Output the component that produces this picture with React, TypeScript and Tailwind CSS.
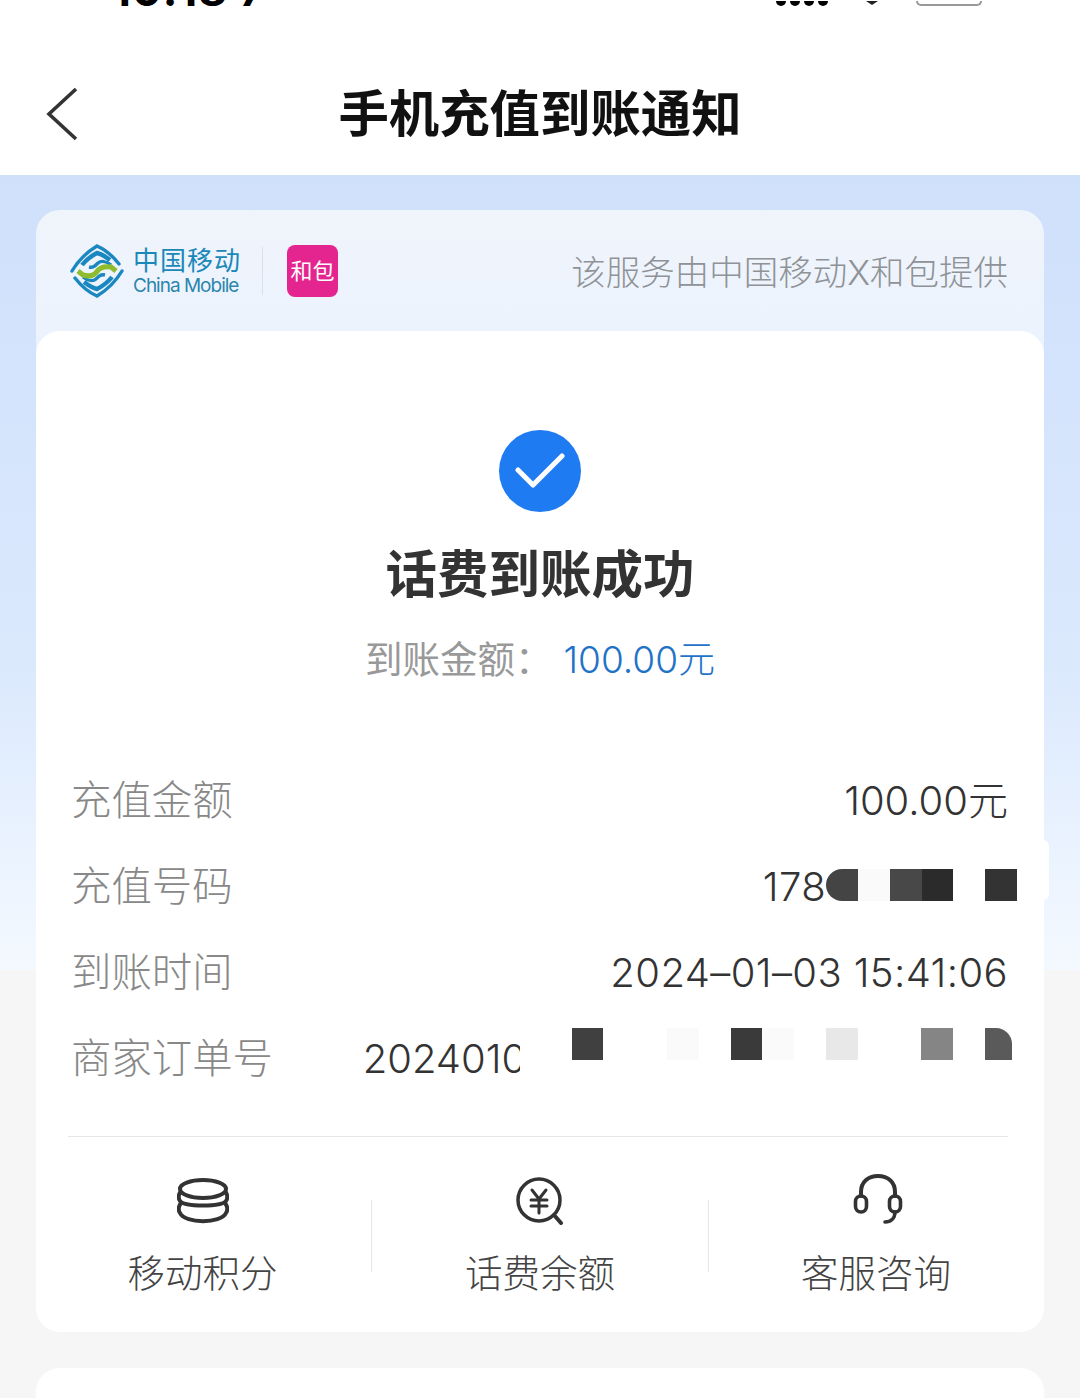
const CJK = "font-['Inter','Noto_Sans_CJK_SC',sans-serif]";

function Logo() {
  const half = (
    <>
      <path d="M2 27 C8 17 17 8 27 2 C34 5 42 11 49 20" stroke="#1a87c0" strokeWidth="3.4" />
      <path d="M12 21 C16 16 21 12 27 9 C32 10 36 13 40 16" stroke="#1a87c0" strokeWidth="4.4" strokeLinecap="butt" />
      <path d="M19 23 C23 24 25 22 28 19 C31 16.5 36 17 41 21" stroke="#1a87c0" strokeWidth="3.4" strokeLinecap="butt" />
    </>
  );
  return (
    <svg width="54" height="54" viewBox="0 0 54 54" fill="none" strokeLinecap="round">
      {half}
      <g transform="rotate(180 27 27)">{half}</g>
      <path d="M8 27 L13 31 C20 33 24 32 27 27.5 C30 23 34 22 41 23 L46 27" stroke="#8dbd2f" strokeWidth="5" strokeLinecap="butt" />
    </svg>
  );
}

function CoinsIcon() {
  return (
    <svg width="52" height="48" viewBox="0 0 52 48" fill="none" stroke="#333" strokeWidth="4">
      <ellipse cx="26" cy="12" rx="23" ry="9" />
      <path d="M4 14 C1 18 1 21 3 24 C8 30 44 30 49 24 C51 21 51 18 48 14" />
      <path d="M4 26 C1 30 1 33 3 36 C8 47 44 47 49 36 C51 33 51 30 48 26" />
    </svg>
  );
}

function YuanSearchIcon() {
  return (
    <svg width="48" height="48" viewBox="0 0 48 48" fill="none" stroke="#333" strokeWidth="3.5" strokeLinecap="round">
      <circle cx="23" cy="23" r="21" />
      <path d="M38 38 L45 46" strokeWidth="4" />
      <path d="M16 13 L23 22 L30 13 M15 23 H31 M15 29 H31 M23 22 V36" strokeWidth="3" />
    </svg>
  );
}

function HeadsetIcon() {
  return (
    <svg className="mb-[4px] ml-[4px]" width="50" height="50" viewBox="0 0 50 50" fill="none" stroke="#333" strokeWidth="3.6" strokeLinecap="round">
      <path d="M8 22 V18 C8 8 15 2 25 2 C35 2 42 8 42 18 V22" strokeWidth="4" />
      <rect x="2.5" y="22" width="11" height="16" rx="5.5" />
      <rect x="36.5" y="22" width="11" height="16" rx="5.5" />
      <path d="M42 38 C42 44 38 48 32 48" />
    </svg>
  );
}

function Row({ label, children }: { label: string; children: React.ReactNode }) {
  return (
    <div className="flex h-[86px] items-center justify-between">
      <span className="text-[40.4px] leading-none font-light text-[#888] whitespace-nowrap">{label}</span>
      {children}
    </div>
  );
}

function Cell({ className }: { className?: string }) {
  return <div className={`h-8 w-[31.8px] shrink-0 ${className ?? ""}`} />;
}

function Action({ icon, label }: { icon: React.ReactNode; label: string }) {
  return (
    <div className="flex flex-col items-center">
      <div className="flex h-[50px] items-center justify-center">{icon}</div>
      <span className="mt-[26px] text-[37.5px] leading-[44px] font-light text-[#444]">{label}</span>
    </div>
  );
}

export default function App() {
  return (
    <div className={`${CJK} h-[1398px] w-[1080px] overflow-hidden bg-[#f6f6f6]`}>
      <header className="relative h-[175px] bg-white">
        <div className="flex h-[6px] items-end justify-between overflow-hidden pl-[112px] pr-[98px]">
          <span className="-mb-[6px] text-[44px] leading-none font-bold tracking-[1px] text-black">10:18 7</span>
          <div className="flex items-start gap-[38px]">
            <div className="flex items-start gap-[4px]">
              <span className="h-[5px] w-[10px] rounded-b-full bg-black" />
              <span className="h-[5px] w-[10px] rounded-b-full bg-black" />
              <span className="h-[5px] w-[10px] rounded-b-full bg-black" />
              <span className="h-[5px] w-[10px] rounded-b-full bg-black" />
            </div>
            <svg width="12" height="4" viewBox="0 0 12 4" className="fill-[#222]">
              <path d="M0 0 H12 L6 4 Z" />
            </svg>
            <div className="h-[5px] w-[66px] rounded-b-[6px] border-x-2 border-b-2 border-[#999]" />
          </div>
        </div>
        <div className="flex h-[169px] items-start justify-center pt-[83px]">
          <h1 className="text-[50.4px] leading-[50px] font-bold text-[#111]">手机充值到账通知</h1>
        </div>
        <svg className="absolute left-[46px] top-[87px]" width="32" height="54" viewBox="0 0 32 54" fill="none" stroke="#333" strokeWidth="3.6">
          <path d="M30 2 L3 27 L30 52" />
        </svg>
      </header>

      <main className="h-[795px] bg-gradient-to-b from-[#cfe0fb] via-[#dbe9fd] via-[62%] to-[#f4f9ff] px-[36px] pt-[35px]">
        <div className="flex h-[145px] items-start justify-between rounded-t-[24px] bg-gradient-to-b from-[#f0f4fb] to-[#ebf3fe] pl-[34px] pr-[36px] pt-[34px]">
          <div className="flex items-center">
            <Logo />
            <div className="ml-[10px] flex flex-col">
              <span className="-translate-x-[1px] translate-y-[1px] text-[26px] leading-[30px] tracking-[1px] text-[#1a88b8]">中国移动</span>
              <span className="-translate-x-[1px] text-[19px] leading-[22px] tracking-[-1px] text-[#2a86ad]">China Mobile</span>
            </div>
            <div className="ml-[20px] h-[48px] w-px bg-[#dbe1ea]" />
            <div className="ml-[24px] flex h-[52px] w-[51px] items-center justify-center rounded-[8px] bg-[#e5258f] text-[22px] leading-none text-white">和包</div>
          </div>
          <span className="mt-[12px] text-[34.5px] leading-none font-light text-[#8f9296]">该服务由中国移动X和包提供</span>
        </div>

        <div className="relative -mt-[24px] h-[1001px] rounded-[24px] bg-white">
          <div className="flex flex-col items-center pt-[99px]">
            <div className="flex h-[82px] w-[82px] items-center justify-center rounded-full bg-[#1f7bf2]">
              <svg width="50" height="36" viewBox="0 0 50 36" fill="none" stroke="#fff" strokeWidth="5" strokeLinecap="round" strokeLinejoin="round">
                <path d="M3 17 L18 32 L47 3" />
              </svg>
            </div>
            <h2 className="mt-[32px] text-[51.5px] leading-[60px] font-bold text-[#333]">话费到账成功</h2>
            <div className="mt-[33px] flex items-center leading-[46px]">
              <span className="text-[37.5px] font-normal text-[#999]">到账金额：</span>
              <span className="ml-[11px] text-[37px] font-light text-[#1f73c7]">100.00元</span>
            </div>
          </div>

          <div className="mt-[75px] pl-[35px] pr-[36px]">
            <Row label="充值金额">
              <span className="text-[40px] leading-none font-light text-[#333]">100.00元</span>
            </Row>
            <Row label="充值号码">
              <div className="-mr-[9px] flex h-full items-center">
                <span className="text-[40px] leading-none font-light tracking-[0.5px] text-[#333]">178</span>
                <div className="mb-[5px] flex">
                  <Cell className="rounded-l-[16px] bg-[#444]" />
                  <Cell className="bg-[#fafafa]" />
                  <Cell className="bg-[#484848]" />
                  <Cell className="bg-[#2b2b2b]" />
                  <Cell />
                  <Cell className="bg-[#333]" />
                </div>
              </div>
            </Row>
            <Row label="到账时间">
              <span className="text-[40px] leading-none font-light tracking-[0.4px] text-[#333]">2024–01–03 15:41:06</span>
            </Row>
            <Row label="商家订单号">
              <div className="-mr-[4px] flex h-full items-center">
                <span className="w-[157px] overflow-hidden text-[40px] leading-none font-light text-[#333]">20240100</span>
                <div className="mb-[30px] ml-[52px] flex">
                  <Cell className="bg-[#404040]" />
                  <Cell />
                  <Cell />
                  <Cell className="bg-[#fafafa]" />
                  <Cell />
                  <Cell className="bg-[#3a3a3a]" />
                  <Cell className="bg-[#fafafa]" />
                  <Cell />
                  <Cell className="bg-[#e8e8e8]" />
                  <Cell />
                  <Cell />
                  <Cell className="bg-[#858585]" />
                  <Cell />
                  <div className="h-8 w-[27px] shrink-0 rounded-tr-[16px] bg-[#5a5a5a]" />
                </div>
              </div>
            </Row>
          </div>

          <div className="ml-[32px] mr-[36px] mt-[34px] h-px bg-[#e6e6e6]" />

          <div className="grid grid-cols-3 pt-[39px]">
            <div className="relative pr-[3px]">
              <Action icon={<CoinsIcon />} label="移动积分" />
              <div className="absolute right-0 top-[24px] h-[72px] w-px bg-[#e6e6e6]" />
            </div>
            <div className="relative">
              <Action icon={<YuanSearchIcon />} label="话费余额" />
              <div className="absolute -right-px top-[24px] h-[72px] w-px bg-[#e6e6e6]" />
            </div>
            <div>
              <Action icon={<HeadsetIcon />} label="客服咨询" />
            </div>
          </div>

          <div className="absolute -right-[5px] top-[509px] h-[60px] w-[8px] rounded-r-[6px] bg-white" />
        </div>

        <div className="mt-[36px] h-[60px] rounded-t-[24px] bg-white" />
      </main>
    </div>
  );
}
